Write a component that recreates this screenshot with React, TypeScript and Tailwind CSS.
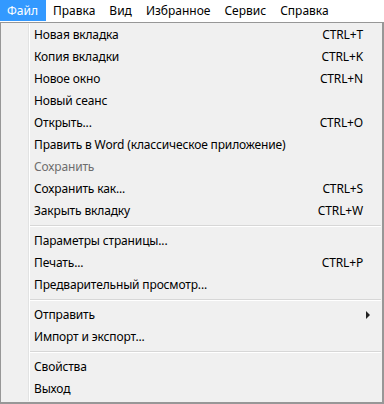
import React from "react";

type Item =
  | { type: "item"; label: string; shortcut?: string; disabled?: boolean; sub?: boolean }
  | { type: "sep" };

const items: Item[] = [
  { type: "item", label: "Новая вкладка", shortcut: "CTRL+T" },
  { type: "item", label: "Копия вкладки", shortcut: "CTRL+K" },
  { type: "item", label: "Новое окно", shortcut: "CTRL+N" },
  { type: "item", label: "Новый сеанс" },
  { type: "item", label: "Открыть...", shortcut: "CTRL+O" },
  { type: "item", label: "Править в Word (классическое приложение)" },
  { type: "item", label: "Сохранить", disabled: true },
  { type: "item", label: "Сохранить как...", shortcut: "CTRL+S" },
  { type: "item", label: "Закрыть вкладку", shortcut: "CTRL+W" },
  { type: "sep" },
  { type: "item", label: "Параметры страницы..." },
  { type: "item", label: "Печать...", shortcut: "CTRL+P" },
  { type: "item", label: "Предварительный просмотр..." },
  { type: "sep" },
  { type: "item", label: "Отправить", sub: true },
  { type: "item", label: "Импорт и экспорт..." },
  { type: "sep" },
  { type: "item", label: "Свойства" },
  { type: "item", label: "Выход" },
];

const menus = ["Файл", "Правка", "Вид", "Избранное", "Сервис", "Справка"];

export default function App() {
  return (
    <div
      className="w-[384px] h-[404px] bg-white text-[12px] text-[#000] overflow-hidden"
      style={{ fontFamily: '"Noto Sans", "Liberation Sans", sans-serif' }}
    >
      <div className="flex h-[22px] bg-white">
        {menus.map((m, i) => (
          <div
            key={m}
            className={
              i === 0
                ? "h-[21px] pl-[7px] pr-[8px] flex items-center bg-[#3399ff] text-white"
                : "h-[21px] px-[7px] flex items-center"
            }
          >
            {m}
          </div>
        ))}
      </div>
      <div className="relative w-[384px] h-[382px] border-l border-t border-[#979797] border-r-2 border-b-2 border-r-[#979797] border-b-[#979797] bg-[#f0f0f0] py-[1px] pr-[1px] flex tracking-[-0.15px]">
        <div className="w-[28px] shrink-0 border-r border-[#e2e3e3]" />
        <div className="w-px shrink-0 bg-white" />
        <div className="flex-1 flex flex-col">
          {items.map((it, idx) =>
            it.type === "sep" ? (
              <div key={idx} className="h-[8px] flex flex-col justify-center">
                <div className="h-px bg-[#d7d7d7]" />
                <div className="h-px bg-white" />
              </div>
            ) : (
              <div
                key={idx}
                className={
                  "h-[22px] flex items-center pl-[4px] pr-[18px] " +
                  (it.disabled ? "text-[#6d6d6d]" : "text-black")
                }
              >
                <span className="flex-1 whitespace-nowrap">{it.label}</span>
                {it.shortcut && <span className="whitespace-nowrap">{it.shortcut}</span>}
                {it.sub && (
                  <svg width="5" height="8" viewBox="0 0 5 8" className="mr-[-8px]">
                    <path d="M0 0 L4 4 L0 8 Z" fill="#222" />
                  </svg>
                )}
              </div>
            )
          )}
        </div>
      </div>
    </div>
  );
}
